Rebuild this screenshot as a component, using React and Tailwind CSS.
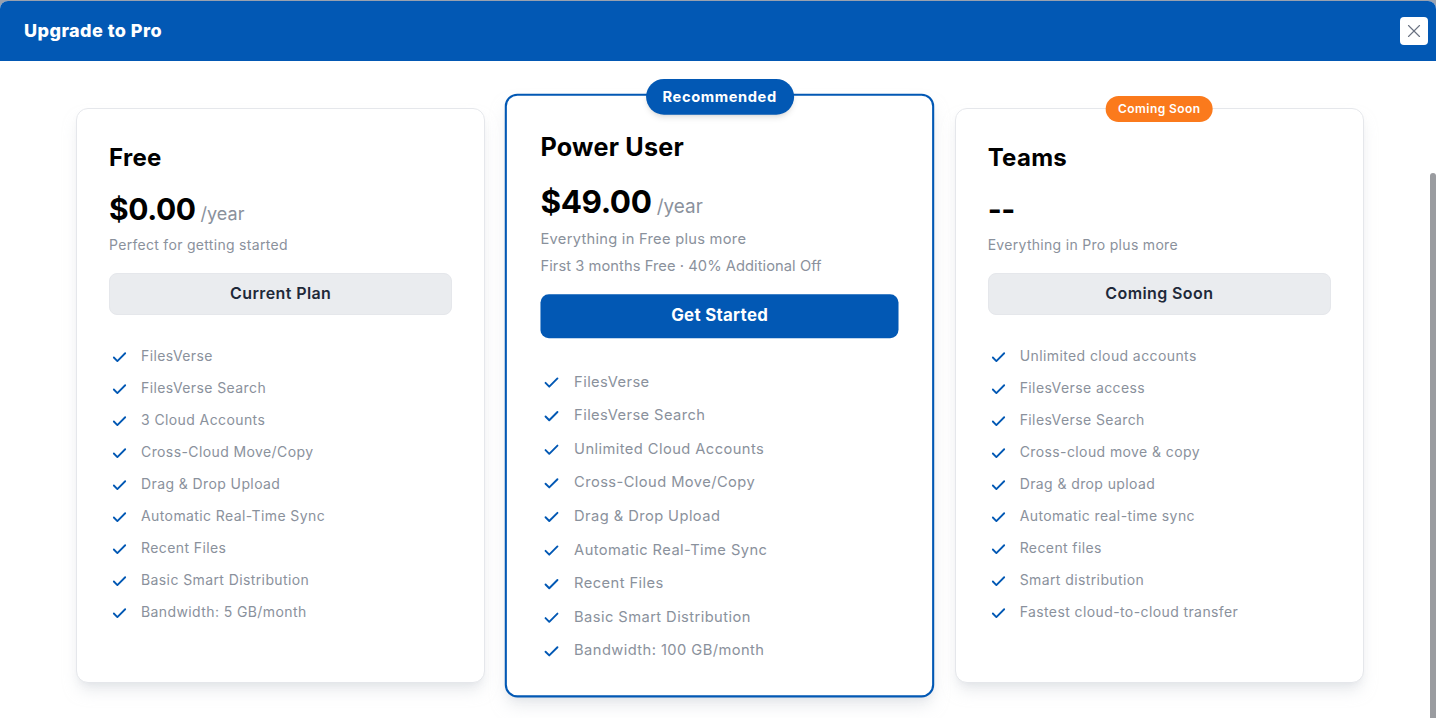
import React from 'react'
import { Check, X } from 'lucide-react'

const freeFeatures = ['FilesVerse', 'FilesVerse Search', '3 Cloud Accounts', 'Cross-Cloud Move/Copy', 'Drag & Drop Upload', 'Automatic Real-Time Sync', 'Recent Files', 'Basic Smart Distribution', 'Bandwidth: 5 GB/month']
const powerFeatures = ['FilesVerse', 'FilesVerse Search', 'Unlimited Cloud Accounts', 'Cross-Cloud Move/Copy', 'Drag & Drop Upload', 'Automatic Real-Time Sync', 'Recent Files', 'Basic Smart Distribution', 'Bandwidth: 100 GB/month']
const teamFeatures = ['Unlimited cloud accounts', 'FilesVerse access', 'FilesVerse Search', 'Cross-cloud move & copy', 'Drag & drop upload', 'Automatic real-time sync', 'Recent files', 'Smart distribution', 'Fastest cloud-to-cloud transfer']

function Features({ items }) {
  return (
    <ul className="flex flex-col">
      {items.map((item) => (
        <li key={item} className="flex h-8 items-center gap-[13px] pl-[2px] text-sm tracking-[0.4px] text-[#8a919c]">
          <Check size={17} strokeWidth={2.6} className="mt-0.5 shrink-0 text-[#0258b4]" />
          <span>{item}</span>
        </li>
      ))}
    </ul>
  )
}

function GrayCard({ name, price, year, note, button, items, badge }) {
  return (
    <div className="relative rounded-xl border border-gray-200 bg-white p-8 shadow-lg shadow-gray-300/50">
      {badge && (
        <span className="absolute left-1/2 top-0 -translate-x-1/2 -translate-y-1/2 whitespace-nowrap rounded-full bg-[#fb7a1c] px-3 py-1 text-xs font-semibold leading-[18px] tracking-[0.45px] text-white">{badge}</span>
      )}
      <h2 className="mt-px h-8 text-2xl font-bold leading-8 tracking-[0.3px] text-black">{name}</h2>
      <div className="mt-[15px] flex h-10 items-baseline gap-[5px]">
        <span className="text-3xl font-bold leading-10 tracking-[-0.4px] text-black">{price}</span>
        {year && <span className="text-lg text-[#8a919c]">/year</span>}
      </div>
      <p className="mt-1.5 h-5 text-sm leading-5 tracking-[0.3px] text-[#8a919c]">{note}</p>
      <button className="mb-[25px] mt-[18px] h-[42px] w-full rounded-lg border border-gray-200 bg-[#eaecef] pb-0.5 text-base font-semibold tracking-[0.4px] text-gray-800">{button}</button>
      <Features items={items} />
    </div>
  )
}

export default function App() {
  return (
    <div className="relative h-[718px] overflow-hidden bg-gray-400 pt-px font-['Inter',sans-serif]">
      <div className="h-full overflow-hidden rounded-t-lg bg-white">
        <header className="flex h-[60px] items-center justify-between bg-[#0258b4] pl-6 pr-2">
          <h1 className="text-lg font-extrabold tracking-[0.45px] text-white">Upgrade to Pro</h1>
          <button className="flex h-7 w-7 items-center justify-center rounded-sm bg-white text-gray-500">
            <X size={22} strokeWidth={1.25} />
          </button>
        </header>
        <div className="grid grid-cols-3 gap-[30px] pl-[76px] pr-[72px] pt-[47px]">
          <GrayCard name="Free" price="$0.00" year note="Perfect for getting started" button="Current Plan" items={freeFeatures} />
          <div className="relative scale-105 rounded-xl border-2 border-[#0258b4] bg-white px-8 pb-[27px] pt-[33px] shadow-lg shadow-gray-300/50">
            <span className="absolute left-1/2 top-[-16px] -translate-x-1/2 whitespace-nowrap rounded-full bg-[#0258b4] px-4 py-1.5 text-sm font-bold leading-[22px] tracking-[0.55px] text-white shadow-md">Recommended</span>
            <h2 className="h-8 text-2xl font-bold leading-8 tracking-[0.2px] text-black">Power User</h2>
            <div className="mt-4 flex h-10 items-baseline gap-[5px]">
              <span className="text-3xl font-bold leading-10 tracking-[-0.4px] text-black">$49.00</span>
              <span className="text-lg text-[#8a919c]">/year</span>
            </div>
            <p className="mt-[5px] h-5 text-sm leading-5 tracking-[0.25px] text-[#8a919c]">Everything in Free plus more</p>
            <p className="mt-1.5 h-5 text-sm leading-5 tracking-[0.05px] text-[#8a919c]">First 3 months Free · 40% Additional Off</p>
            <button className="mb-[25px] mt-[17px] h-[42px] w-full rounded-lg bg-[#0258b4] pb-0.5 text-base font-bold tracking-[0.3px] text-white">Get Started</button>
            <Features items={powerFeatures} />
          </div>
          <GrayCard name="Teams" price="--" note="Everything in Pro plus more" button="Coming Soon" items={teamFeatures} badge="Coming Soon" />
        </div>
      </div>
      <div className="absolute bottom-0 right-0 top-[173px] w-1.5 rounded-t-md bg-[#9a9ca0]" />
    </div>
  )
}
